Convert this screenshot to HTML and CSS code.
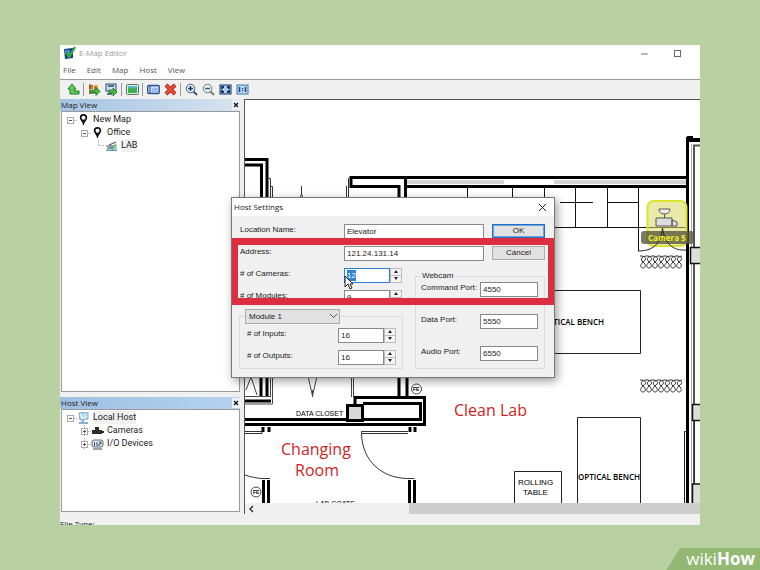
FILE: index.html
```html
<!DOCTYPE html>
<html lang="en">
<head>
<meta charset="utf-8">
<title>E-Map Editor</title>
<link rel="stylesheet" href="styles.css">
</head>
<body>
<main class="app">
  <header class="titlebar">
    <svg class="logo" width="13" height="14" viewBox="0 0 13 14"><path d="M1 3l9-1v10l-8 1z" fill="#163a8c"/><path d="M2 4h5v4h-5z" fill="#4c86d8"/><path d="M3 6l3 5 6-10" fill="none" stroke="#2fae35" stroke-width="2.4"/></svg>
    <h1>E-Map Editor</h1>
    <div class="window-controls">
      <button aria-label="Minimize"><svg width="9" height="9"><path d="M1 5h7" stroke="#777"/></svg></button>
      <button aria-label="Maximize"><svg width="9" height="9"><rect x="1.500" y="1.500" width="6" height="6" fill="none" stroke="#666"/></svg></button>
    </div>
  </header>
  <nav class="menu">
    <button>File</button><button>Edit</button><button>Map</button><button>Host</button><button>View</button>
  </nav>
  <div class="toolbar">
    <button aria-label="Up"><svg viewBox="0 0 13 13"><path d="M5 1L1 6h2v5h9V8H7V6h2z" fill="#5fd35a" stroke="#1d7a22"/></svg></button>
    <i></i>
    <button aria-label="Add map"><svg viewBox="0 0 13 13"><path d="M1 2h4v4H1z" fill="#e2622c"/><path d="M6 2h4v4H6z" fill="#e7bd3b"/><path d="M1 7h5v4H1z" fill="#68a647"/><path d="M2 1v10M7 3v8" stroke="#785018"/><path d="M4 7h4V4l4 4.500-4 4v-3H4z" fill="#4bbc45" stroke="#206d21" stroke-width=".8"/></svg></button>
    <button aria-label="Add host"><svg viewBox="0 0 13 13"><rect x="1" y="1" width="10" height="7" fill="#cfe0f2" stroke="#29466f"/><path d="M3 3h6M2 11h5" stroke="#29466f" stroke-width="1.500"/><path d="M4 7h4V5l4 4-4 4v-3H4z" fill="#4bbc45" stroke="#206d21" stroke-width=".8"/></svg></button>
    <i></i>
    <button aria-label="Load image"><svg viewBox="0 0 13 13"><rect x=".5" y="1.500" width="12" height="10" rx="1" fill="#e3eee1" stroke="#5b735d"/><path d="M2 3h9v7H2z" fill="#54bde0"/><path d="M2 5l3-1 3 2 3-2v6H2z" fill="#3fae4e"/></svg></button>
    <i></i>
    <button aria-label="Rename"><svg viewBox="0 0 13 13"><rect x=".7" y="2.500" width="11.600" height="8" rx="1" fill="#c5d8f6" stroke="#2f4f91" stroke-width="1.300"/><path d="M3 3v7" stroke="#2f4f91"/><path d="M5 5h6v4H5z" fill="#9bbcf0"/></svg></button>
    <button aria-label="Delete"><svg viewBox="0 0 13 13"><path d="M2 2l9 9M11 2l-9 9" stroke="#8f1d12" stroke-width="4"/><path d="M2 2l9 9M11 2l-9 9" stroke="#ee4931" stroke-width="2.600"/></svg></button>
    <i></i>
    <button aria-label="Zoom in"><svg viewBox="0 0 13 13"><path d="M8 8l4 4" stroke="#38527a" stroke-width="2"/><circle cx="5.500" cy="5.500" r="4.300" fill="#e2eef8" stroke="#4d5e6c"/><path d="M3 5.500h5M5.500 3v5" stroke="#123c70" stroke-width="1.400"/></svg></button>
    <button aria-label="Zoom out"><svg viewBox="0 0 13 13"><path d="M8 8l4 4" stroke="#6f7c74" stroke-width="2"/><circle cx="5.500" cy="5.500" r="4.300" fill="#e2eef0" stroke="#6f7c80"/><path d="M3 5.500h5" stroke="#315f70" stroke-width="1.400"/></svg></button>
    <button aria-label="Fit"><svg viewBox="0 0 13 13"><rect x="1" y="2" width="11" height="9" fill="#a9cbec" stroke="#173359"/><path d="M2 3h3v2H4v1H2zM11 3H8v2h1v1h2zM2 10h3V8H4V7H2zM11 10H8V8h1V7h2z" fill="#14396c"/></svg></button>
    <button aria-label="Actual size"><svg viewBox="0 0 13 13"><rect x="1" y="2" width="11" height="9" fill="#b7d5f2" stroke="#4575aa"/><path d="M3.500 4v5M9.500 4v5M6.500 5v1M6.500 7v1" stroke="#163d74" stroke-width="1.400"/></svg></button>
  </div>

  <div class="workspace">
    <aside class="sidebar">
      <section class="panel map-panel">
        <header><h2>Map View</h2><button aria-label="Close Map View"><svg width="6" height="6" viewBox="0 0 6 6"><path d="M1 1l4 4M5 1l-4 4" stroke="#111" stroke-width="1.300"/></svg></button></header>
        <ul class="tree">
          <li><svg class="box"><use href="#minus"/></svg><svg class="ico"><use href="#pin"/></svg>New Map</li>
          <li class="deep"><svg class="box"><use href="#minus"/></svg><svg class="ico"><use href="#pin"/></svg>Office</li>
          <li class="leaf"><svg class="box"><path d="M3.500 0v5.500H10" fill="none" stroke="#aaa" stroke-dasharray="1 1"/></svg><svg class="ico" viewBox="0 0 13 12"><path d="M1 10h11V5L9 7 6 5z" fill="#a5cfe9"/><path d="M1 6h8M2 8h6M4 5l7-3" stroke="#4d5c65" stroke-width="1.200"/><path d="M7 10l4-6" stroke="#76b665" stroke-width="1.500"/><path d="M1 10.500h11" stroke="#5a9bc8"/></svg><span class="selected">LAB</span></li>
        </ul>
      </section>
      <section class="panel host-panel">
        <header><h2>Host View</h2><button aria-label="Close Host View"><svg width="6" height="6" viewBox="0 0 6 6"><path d="M1 1l4 4M5 1l-4 4" stroke="#111" stroke-width="1.300"/></svg></button></header>
        <ul class="tree">
          <li><svg class="box"><use href="#minus"/></svg><svg class="ico" viewBox="0 0 13 12"><path d="M2 1l9-1v7l-8 1z" fill="#b7dcf3" stroke="#6996b4" stroke-width=".8"/><path d="M6 8v2M2 11h9" stroke="#579bc3" stroke-width="1.500"/><path d="M3 2l3 5 4-3" stroke="#fff" fill="none"/></svg><span class="selected">Local Host</span></li>
          <li class="deep"><svg class="box"><use href="#plus"/></svg><svg class="ico" viewBox="0 0 13 12"><path d="M1 5h10v4H1zM4 2h4v3H4zM11 6h2v2h-2z" fill="#2b2b2b"/></svg>Cameras</li>
          <li class="deep"><svg class="box"><use href="#plus"/></svg><svg class="ico" viewBox="0 0 13 12"><rect x="1" y="2" width="11" height="7" rx="2" fill="#e5e9ef" stroke="#596878"/><path d="M3.500 4v4M6 4v4M8 4h2v2H8v2M2 11h9" stroke="#334963" fill="none"/></svg>I/O Devices</li>
        </ul>
      </section>
    </aside>

    <section class="canvas" aria-label="Floor plan">
      <svg class="plan" viewBox="245 100 455 403" preserveAspectRatio="xMinYMin slice">
        <!-- upper-left walls -->
        <g fill="none" stroke="#000" stroke-width="3">
          <path d="M245 159.500h22V200M245 165h16.500V200"/>
          <path d="M399 200V186.500H351v-9H687M405.500 177.500V200M404 186.500H687"/>
        </g>
        <g fill="none" stroke="#333">
          <path d="M268 178.500h2.500V200M270 186.500h2.500V200M348.500 178v22M346.500 186v14M301.500 186v8l-2 6M301.500 194l2 6"/>
        </g>
        <path d="M407 182h97M554 182h132" stroke="#d3d3d3" stroke-width="4"/>
        <!-- cabinets -->
        <path d="M467.500 188v12M512.500 188v12M544.500 188v12M575.500 188v40M607.500 188v40M638.500 188v63M560 202.500h33M607 202.500h32M555 227.500h131" fill="none" stroke="#111"/>
        <!-- right wall -->
        <path d="M687.500 137V503" stroke="#000" stroke-width="3"/>
        <path d="M687 136h6v2h7v4H687z"/>
        <path d="M691.500 144V503" stroke="#aaa"/><path d="M694 503V145.500h6" fill="none" stroke="#555" stroke-width="2"/>
        <path d="M690.500 247.500h12v16h-12zM692.500 404.500h12v16h-12zM692.500 484h12v24h-12z" fill="#ddd" stroke="#111" stroke-width="1.500"/>
        <path d="M684.500 503V431.500h2M694.500 421v62" fill="none" stroke="#222" />
        <!-- coils -->
        <g fill="none" stroke="#333">
          <path id="coil" d="M640 256h2c4 1 5 3 1 6-4 4-2 6 0 6s4-3 0-6c-3-3-2-5 3-6h2c4 1 5 3 1 6-4 4-2 6 0 6s4-3 0-6c-3-3-2-5 3-6h2c4 1 5 3 1 6-4 4-2 6 0 6s4-3 0-6c-3-3-2-5 3-6h2c4 1 5 3 1 6-4 4-2 6 0 6s4-3 0-6c-3-3-2-5 3-6h2c4 1 5 3 1 6-4 4-2 6 0 6s4-3 0-6c-3-3-2-5 3-6h2c4 1 5 3 1 6-4 4-2 6 0 6s4-3 0-6c-3-3-2-5 3-6h2c4 1 5 3 1 6-4 4-2 6 0 6s4-3 0-6c-3-3-2-5 3-6"/>
          <use href="#coil" y="124"/>
        </g>
        <!-- benches -->
        <path d="M540 290.500h100.500v63H540M577.500 503V417.500h63V503M514.500 503V471.500h47V503" fill="none" stroke="#222"/>
        <g class="bench"><text x="542" y="325">OPTICAL BENCH</text><text x="578" y="480">OPTICAL BENCH</text></g>
        <g class="cad"><text x="518" y="485">ROLLING</text><text x="523" y="495">TABLE</text></g>
        <g class="cad small"><text x="296" y="416">DATA CLOSET</text><text x="316" y="506">LAB COATS</text></g>
        <!-- lower-left walls -->
        <g fill="none" stroke="#000" stroke-width="3">
          <path d="M261 376v20M267 376v20M245 401h26M399 376v21M407 376v21"/>
          <path d="M355 404v-6.500h69.500v27H245M363 403.500h57.500v16H245"/>
        </g>
        <path d="M245 396.500h26M270.500 376v20M272.500 376v28H245M351.500 376v21M353.500 376v21M246 390l5-13 6 18M308 376l4.500 20 4.500-20M312.500 390v7" fill="none" stroke="#444"/>
        <rect x="347.500" y="405.500" width="15" height="15" fill="#d8d8d8" stroke="#000" stroke-width="3"/>
        <path d="M245 431.500h17v2h-17M408 431.500h-46.500v2H408M361.500 434c1 27 20 44 46 44.500h7M245 475c6 2 11 3 17 3.500h8" fill="none" stroke="#333"/>
        <path d="M263 427v5M269 427v5M410 427v5M415 427v5M263.500 480v23M268.500 480v23M409.500 480v23M414.500 480v23" stroke="#000" stroke-width="3"/>
        <g fill="#fff" stroke="#444"><circle cx="416.500" cy="389" r="5"/><circle cx="256" cy="492" r="5"/></g>
        <g class="fe"><text x="413" y="391">FE</text><text x="253" y="494">FE</text></g>
        <g class="room"><text x="281" y="455">Changing</text><text x="295" y="476">Room</text><text x="454" y="416">Clean Lab</text></g>
        <!-- camera marker -->
        <rect x="647.500" y="201" width="39" height="45" rx="6" fill="#d9d861" fill-opacity=".55" stroke="#dce32c" stroke-width="2"/>
        <path d="M659 209h11c0 3-2 5-5.500 5S659 212 659 209zM664.500 214v4" fill="#eee" stroke="#555"/>
        <path d="M656 218h16v8h-16zM672 220l5 2v4h-5z" fill="#ddd" stroke="#555"/>
        <rect x="641" y="231" width="53" height="13" rx="3" fill="#55553c" fill-opacity=".78"/>
        <path d="M638 251c15 0 23-7 24.500-23 2 16 11 23 23.500 22" fill="none" stroke="#222"/>
        <text class="camera" x="648" y="241">Camera 5</text>
      </svg>
      <div class="scrollbar"><svg width="12" height="11"><path d="M8 3L5 6l3 3" fill="none" stroke="#222" stroke-width="1.300"/></svg><span></span></div>
    </section>
  </div>
  <footer class="status">File Type:</footer>

  <form class="dialog" role="dialog" aria-labelledby="dialog-title">
    <header><h2 id="dialog-title">Host Settings</h2><button type="button" aria-label="Close"><svg width="9" height="9"><path d="M1 1l7 7M8 1L1 8" stroke="#222"/></svg></button></header>
    <div class="dialog-body">
      <div class="row"><label for="loc">Location Name:</label><input id="loc" class="wide" value="Elevator"><button type="button" class="ok">OK</button></div>
      <div class="row"><label for="addr">Address:</label><input id="addr" class="wide" value="121.24.131.14"><button type="button">Cancel</button></div>
      <div class="columns">
        <div class="left">
          <div class="row"><label for="cams"># of Cameras:</label><span class="spin active"><input id="cams" value="12"><span><button type="button" aria-label="More cameras"></button><button type="button" aria-label="Fewer cameras"></button></span></span></div>
          <div class="row"><label for="mods"># of Modules:</label><span class="spin"><input id="mods" value="9"><span><button type="button" aria-label="More modules"></button><button type="button" aria-label="Fewer modules"></button></span></span></div>
          <fieldset class="module">
            <legend><select aria-label="Module"><option>Module 1</option></select></legend>
            <div class="row"><label for="ins"># of Inputs:</label><span class="spin"><input id="ins" value="16"><span><button type="button" aria-label="More inputs"></button><button type="button" aria-label="Fewer inputs"></button></span></span></div>
            <div class="row"><label for="outs"># of Outputs:</label><span class="spin"><input id="outs" value="16"><span><button type="button" aria-label="More outputs"></button><button type="button" aria-label="Fewer outputs"></button></span></span></div>
          </fieldset>
        </div>
        <fieldset class="webcam">
          <legend>Webcam</legend>
          <div class="ports">
            <label for="cmd">Command Port:</label><input id="cmd" value="4550">
            <label for="data">Data Port:</label><input id="data" value="5550">
            <label for="audio">Audio Port:</label><input id="audio" value="6550">
          </div>
        </fieldset>
      </div>
    </div>
    <div class="highlight"></div>
    <svg class="cursor" width="10" height="15" viewBox="0 0 10 15"><path d="M1 1v11l3-3 2 5 2-1-2-4h3z" fill="#fff" stroke="#222"/></svg>
  </form>
</main>
<div class="brand"><span>wiki</span><b>How</b></div>
<svg width="0" height="0" class="defs">
  <symbol id="minus" viewBox="0 0 10 12"><path d="M7 6.500h3" stroke="#aaa" stroke-dasharray="1 1"/><rect x=".5" y="3.500" width="6" height="6" fill="#fff" stroke="#aaa"/><path d="M2 6.500h3" stroke="#555"/></symbol>
  <symbol id="plus" viewBox="0 0 10 12"><path d="M7 6.500h3M3.500 0v3M3.500 10v2" stroke="#aaa" stroke-dasharray="1 1"/><rect x=".5" y="3.500" width="6" height="6" fill="#fff" stroke="#aaa"/><path d="M2 6.500h3M3.500 5v3" stroke="#555"/></symbol>
  <symbol id="pin" viewBox="0 0 13 12"><path d="M6.500 0a3.700 3.700 0 0 0-3.700 3.700C2.800 6 6 8 6 11h1c0-3 3.200-5 3.200-7.300A3.700 3.700 0 0 0 6.500 0z" fill="#111"/><circle cx="6.500" cy="3.700" r="2" fill="#fff"/></symbol>
</svg>
</body>
</html>
```
FILE: styles.css
```css
* { box-sizing: border-box; }
body {
  margin: 0;
  height: 100vh;
  padding: 45px 60px;
  background: #b9d1a2;
  font-family: "Open Sans", "Noto Sans", sans-serif;
  font-size: 8px;
  line-height: 12px;
  color: #222;
  overflow: hidden;
}
h1, h2 { margin: 0; font-size: 8px; font-weight: 400; }
button, input, select { font: inherit; color: inherit; margin: 0; padding: 0; border: 0; background: none; }
svg { display: block; flex: none; }
.defs { position: absolute; }

.app {
  position: relative;
  height: 100%;
  display: flex;
  flex-direction: column;
  background: #f0f0f0;
  overflow: hidden;
}
.titlebar {
  display: flex;
  align-items: center;
  gap: 3px;
  height: 16px;
  padding: 0 18px 0 3px;
  background: #fff;
  color: #999;
  flex: none;
}
.window-controls { display: flex; gap: 24px; margin-left: auto; }
.menu {
  display: flex;
  gap: 11px;
  align-items: center;
  height: 18px;
  padding-left: 3px;
  background: #fff;
  color: #555;
  flex: none;
}
.toolbar {
  display: flex;
  align-items: center;
  gap: 4px;
  height: 20px;
  padding-left: 7px;
  border-top: 1px solid #999;
  flex: none;
}
.toolbar svg { width: 13px; height: 13px; }
.toolbar i { width: 1px; height: 13px; margin-left: -1px; background: #999; }
.workspace { flex: 1; min-height: 0; display: flex; }

.sidebar {
  width: 180px;
  margin-right: 4px;
  padding-bottom: 2px;
  display: flex;
  flex-direction: column;
  gap: 5px;
  flex: none;
}
.panel { display: flex; flex-direction: column; }
.map-panel { flex: 294; }
.host-panel { flex: 115; }
.panel header {
  display: flex;
  align-items: center;
  justify-content: space-between;
  height: 12px;
  padding-left: 1px;
  background: linear-gradient(90deg, #a4c3e3, #d7e3f0);
}
.panel header button { padding: 2px 1px; background: #edf2f8; }
.host-panel header { background: linear-gradient(90deg, #9fc0e2, #b5d3f0); }
.tree {
  flex: 1;
  margin: 0 0 0 1px;
  padding: 1px 5px;
  list-style: none;
  background: #fff;
  border: 1px solid #999;
  font-family: Roboto, sans-serif;
  font-size: 9px;
  line-height: 13px;
}
.tree li { display: flex; align-items: center; height: 13px; }
.tree .deep { padding-left: 14px; }
.tree .leaf { padding-left: 28px; }
.box { width: 10px; height: 12px; }
.ico { width: 13px; height: 12px; margin-right: 3px; }
.selected { background: #f0f0f0; }

.canvas {
  flex: 1;
  min-width: 0;
  display: flex;
  flex-direction: column;
  border-left: 1px solid #555;
  border-top: 1px solid #555;
  background: #fff;
}
.plan { width: 100%; flex: 1; min-height: 0; }
.bench { font-size: 8px; font-weight: 600; }
.cad { font-family: "Liberation Sans", sans-serif; font-size: 8px; }
.small { font-size: 7px; }
.fe { font-family: "Liberation Sans", sans-serif; font-size: 5px; font-weight: 700; }
.room { font-size: 16px; fill: #cf1f22; }
.camera { font-size: 8px; font-weight: 700; fill: #f0ee22; }
.scrollbar { display: flex; height: 11px; background: #f0f0f0; flex: none; }
.scrollbar span { width: 64%; margin-left: auto; background: #cdcdcd; }
.status { height: 11px; padding-top: 4px; flex: none; overflow: hidden; }

.dialog {
  position: absolute;
  left: 171px;
  top: 152px;
  width: 324px;
  border: 1px solid #777;
  background: #f0f0f0;
  box-shadow: 2px 3px 9px rgba(0, 0, 0, .4);
  font-family: "Liberation Sans", sans-serif;
}
.dialog header {
  display: flex;
  align-items: center;
  justify-content: space-between;
  height: 18px;
  padding: 0 7px 0 2px;
  background: #fff;
  font-family: "Open Sans", sans-serif;
}
.dialog-body { padding: 4px 9px 8px 8px; }
.row { display: flex; align-items: center; height: 22px; }
.row label { width: 104px; padding-bottom: 3px; }
.dialog input { height: 15px; padding: 0 2px; border: 1px solid #888; background: #fff; min-width: 0; }
.dialog .wide { width: 140px; }
.row > button {
  flex: 1;
  height: 14px;
  margin-left: 8px;
  border: 1px solid #adadad;
  background: #e1e1e1;
  line-height: 12px;
}
.row > .ok { border: 1px solid #1f6fc4; outline: 1px solid #6fa5dc; outline-offset: -2px; }
.columns { display: flex; justify-content: space-between; }
.spin { display: flex; width: 58px; }
.spin input { flex: 1; width: 0; }
.spin > span { display: flex; flex-direction: column; width: 12px; border: 1px solid #bbb; background: #f4f4f4; }
.spin button { flex: 1; display: grid; place-items: center; }
.spin button + button { border-top: 1px solid #bbb; }
.spin button::before { content: ""; border: 2px solid transparent; border-top: 0; border-bottom: 3px solid #222; }
.spin button + button::before { transform: rotate(180deg); }
.dialog .active input {
  border-color: #2b7fd4;
  color: #fff;
  background: linear-gradient(#2d83d8, #2d83d8) 2px 1px / 9px 11px no-repeat #fff;
}
fieldset { margin: 0; padding: 0; border: 1px solid #dcdcdc; min-width: 0; }
legend { padding: 0; }
.module { width: 164px; margin: 1px 0 0 -1px; padding-left: 7px; }
.module legend { height: 15px; margin-left: -2px; }
.module select {
  appearance: none;
  display: block;
  width: 95px;
  height: 15px;
  padding-left: 3px;
  border: 1px solid #adadad;
  background:
    linear-gradient(45deg, transparent 45%, #555 45% 58%, transparent 58%) 84px 4px / 4px 4px no-repeat,
    linear-gradient(-45deg, transparent 45%, #555 45% 58%, transparent 58%) 87px 4px / 4px 4px no-repeat,
    #e1e1e1;
}
.module .row label { width: 91px; }
.webcam { width: 130px; margin-top: 6px; padding: 0 6px 0 5px; }
.webcam legend { height: 12px; padding: 0 2px 0 1px; }
.ports { display: grid; grid-template-columns: 1fr 58px; row-gap: 17px; align-items: center; }
.ports label { padding: 0 0 3px; }

.highlight {
  position: absolute;
  left: 0;
  right: 0;
  top: 40px;
  height: 67px;
  border: 7px solid #dc2e40;
  border-width: 7px 6px;
  pointer-events: none;
}
.cursor { position: absolute; left: 112px; top: 77px; }

.brand {
  position: fixed;
  right: 0;
  bottom: 0;
  padding: 2px 5px 2px 20px;
  background: #93b874;
  clip-path: polygon(14px 0, 100% 0, 100% 100%, 0 100%);
  color: #fff;
  font-size: 17px;
  line-height: 18px;
}
```
